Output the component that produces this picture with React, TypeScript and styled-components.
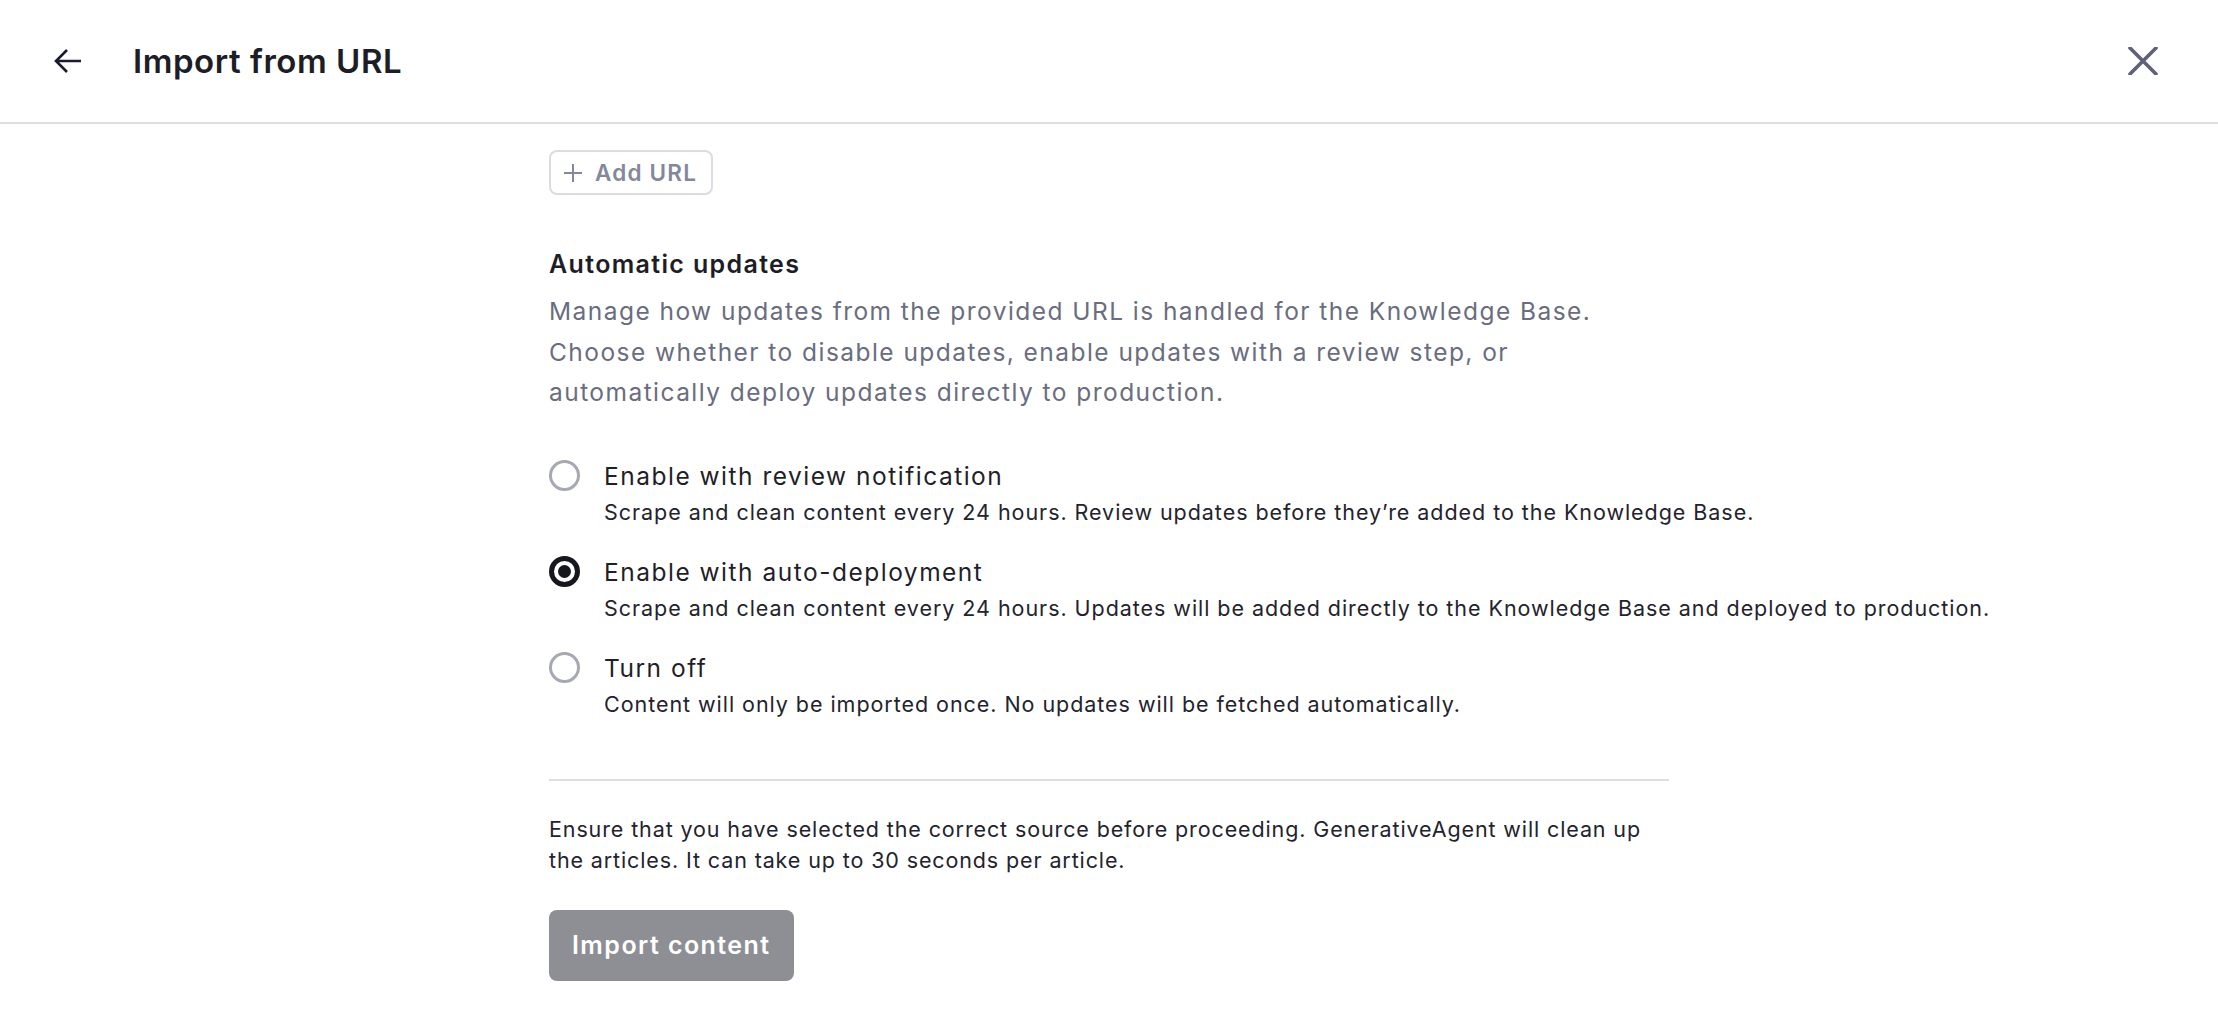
import React, { useState } from "react";
import styled, { createGlobalStyle } from "styled-components";

const GlobalStyle = createGlobalStyle`
  * { box-sizing: border-box; }
  body {
    margin: 0;
    background: #ffffff;
    font-family: Inter, "Noto Sans", "Liberation Sans", sans-serif;
    color: #1d1d27;
  }
`;

const Page = styled.div`
  min-height: 100vh;
  display: flex;
  flex-direction: column;
`;

const Header = styled.header`
  height: 124px;
  display: flex;
  align-items: center;
  padding: 0 60px 0 54px;
  border-bottom: 2px solid #dcdde5;
`;

const IconButton = styled.button<{ $tone?: string }>`
  display: inline-flex;
  align-items: center;
  justify-content: center;
  background: none;
  border: none;
  padding: 0;
  cursor: pointer;
  color: ${(p) => p.$tone || "#1b1b2f"};
`;

const Title = styled.h1`
  margin: 0 0 0 51px;
  flex: 1;
  font-size: 33px;
  font-weight: 600;
  letter-spacing: 0.55px;
  color: #1d1d27;
`;

const Content = styled.main`
  width: 1120px;
  margin: 0 auto;
  padding-top: 26px;
  display: flex;
  flex-direction: column;
  align-items: flex-start;
`;

const AddButton = styled.button`
  display: inline-flex;
  align-items: center;
  gap: 12px;
  height: 45px;
  padding: 0 14px 0 12px;
  border: 2px solid #dadbe3;
  border-radius: 8px;
  background: #fff;
  color: #85879a;
  font-family: inherit;
  font-size: 22.5px;
  font-weight: 600;
  letter-spacing: 1.2px;
  cursor: pointer;
`;

const SectionTitle = styled.h2`
  margin: 52px 0 0;
  font-size: 25px;
  line-height: 34px;
  font-weight: 600;
  letter-spacing: 1.35px;
  color: #1d1d27;
`;

const SectionText = styled.p`
  margin: 10px 0 0;
  font-size: 24.5px;
  line-height: 40.5px;
  letter-spacing: 1.45px;
  color: #6a6d80;
`;

const Options = styled.div`
  margin-top: 46px;
  display: flex;
  flex-direction: column;
  gap: 28px;
`;

const Option = styled.label`
  display: grid;
  grid-template-columns: 31px auto;
  column-gap: 24px;
  cursor: pointer;
`;

const Radio = styled.span<{ $checked: boolean }>`
  margin-top: 1px;
  width: 31px;
  height: 31px;
  border-radius: 50%;
  border: ${(p) => (p.$checked ? "5px solid #17171f" : "3px solid #a6a8b3")};
  display: flex;
  align-items: center;
  justify-content: center;

  &::after {
    content: "";
    display: ${(p) => (p.$checked ? "block" : "none")};
    width: 13px;
    height: 13px;
    border-radius: 50%;
    background: #17171f;
  }
`;

const OptionText = styled.div`
  display: flex;
  flex-direction: column;
  gap: 4px;
`;

const OptionLabel = styled.span`
  font-size: 24.5px;
  line-height: 34px;
  letter-spacing: 1.5px;
  color: #1f1f29;
`;

const OptionDesc = styled.span`
  font-size: 21.5px;
  line-height: 30px;
  letter-spacing: 0.95px;
  color: #23232d;
  white-space: nowrap;
`;

const Divider = styled.hr`
  width: 100%;
  margin: 60px 0 0;
  border: none;
  border-top: 2px solid #dcdde5;
`;

const Notice = styled.p`
  margin: 33px 0 0;
  font-size: 21.5px;
  line-height: 31px;
  letter-spacing: 0.88px;
  color: #23232d;
`;

const PrimaryButton = styled.button`
  margin-top: 34px;
  height: 71px;
  padding: 0 23px;
  border: none;
  border-radius: 8px;
  background: #8e8f94;
  color: #ffffff;
  font-family: inherit;
  font-size: 25px;
  font-weight: 600;
  letter-spacing: 1.45px;
  cursor: not-allowed;
`;

const options = [
  {
    id: "review",
    label: "Enable with review notification",
    desc: "Scrape and clean content every 24 hours. Review updates before they\u2019re added to the Knowledge Base.",
  },
  {
    id: "auto",
    label: "Enable with auto-deployment",
    desc: "Scrape and clean content every 24 hours. Updates will be added directly to the Knowledge Base and deployed to production.",
  },
  {
    id: "off",
    label: "Turn off",
    desc: "Content will only be imported once. No updates will be fetched automatically.",
  },
];

const App = () => {
  const [mode, setMode] = useState("auto");

  return (
    <Page>
      <GlobalStyle />
      <Header>
        <IconButton aria-label="Back">
          <svg width="28" height="26" viewBox="0 0 28 26" fill="none">
            <path d="M13 2 L2 13 L13 24 M2 13 H27" stroke="currentColor" strokeWidth="2.6" strokeLinejoin="miter" />
          </svg>
        </IconButton>
        <Title>Import from URL</Title>
        <IconButton aria-label="Close" $tone="#5f6276">
          <svg width="30" height="28" viewBox="0 0 30 28" fill="none">
            <path d="M2 1 L28 27 M28 1 L2 27" stroke="currentColor" strokeWidth="3.6" strokeLinecap="round" />
          </svg>
        </IconButton>
      </Header>

      <Content>
        <AddButton>
          <svg width="20" height="20" viewBox="0 0 20 20" fill="none">
            <path d="M10 1 V19 M1 10 H19" stroke="currentColor" strokeWidth="2" />
          </svg>
          Add URL
        </AddButton>

        <SectionTitle>Automatic updates</SectionTitle>
        <SectionText>
          Manage how updates from the provided URL is handled for the Knowledge Base. Choose whether to disable
          updates, enable updates with a review step, or automatically deploy updates directly to production.
        </SectionText>

        <Options>
          {options.map((o) => (
            <Option key={o.id} onClick={() => setMode(o.id)}>
              <Radio $checked={mode === o.id} />
              <OptionText>
                <OptionLabel>{o.label}</OptionLabel>
                <OptionDesc>{o.desc}</OptionDesc>
              </OptionText>
            </Option>
          ))}
        </Options>

        <Divider />

        <Notice>
          Ensure that you have selected the correct source before proceeding. GenerativeAgent will clean up the
          articles. It can take up to 30 seconds per article.
        </Notice>

        <PrimaryButton disabled>Import content</PrimaryButton>
      </Content>
    </Page>
  );
};

export default App;
